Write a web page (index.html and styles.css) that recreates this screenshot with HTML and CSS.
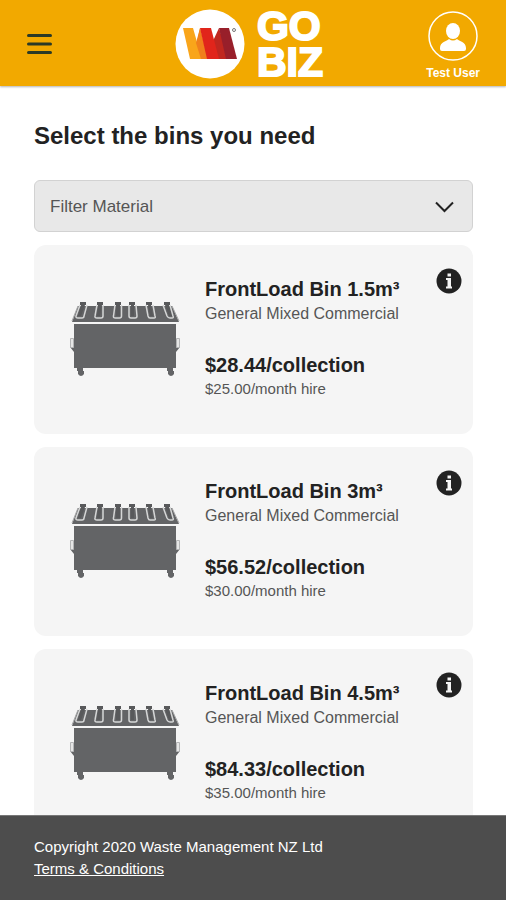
FILE: index.html
```html
<!DOCTYPE html>
<html lang="en">
<head>
<meta charset="utf-8">
<meta name="viewport" content="width=device-width, initial-scale=1">
<title>Go Biz</title>
<link rel="stylesheet" href="styles.css">
</head>
<body>
<svg class="sprite" aria-hidden="true">
  <symbol id="bin" viewBox="0 0 112 76">
    <g fill="#636466">
      <path d="M9 5H103L110 21H3Z"/>
      <path d="M5 23H107V67H5Z"/>
      <path d="M8 67h6v3h1v3q-3 4-6 0v-3H8zM98 67h6v3h1v3q-3 4-6 0v-3h-1z"/>
      <path d="M1 46h4v5zM107 46h4l-4 5z"/>
    </g>
    <g fill="#e6e6e6" stroke="#b4b5b6">
      <path d="M1.500 37.500h3v9h-3zM107.500 37.500h3v9h-3z"/>
    </g>
    <path d="M9 5 3 20M103 5l7 15" stroke="#a5a6a7" stroke-width="1"/>
    <g fill="#58595b">
      <path d="M11 1h6v3h-1l-4 11H9l3-11h-1zM28 1h6v3h-1l-2 11h-3l1-11h-1zM46 1h6v3h-1v11h-4V4h-1zM60 1h6v3h-1v11h-3V4h-2zM77 1h6v3h-1l2 11h-3L79 4h-2zM95 1h6v3h-1l3 11h-3L96 4h-1z"/>
    </g>
    <g fill="none" stroke="#d5d6d6" stroke-width="1.500">
      <path d="M11 4 7 15q-.5 2 2 2h4q2 0 2-2l3-11"/>
      <path d="M28 4 26 15q-.5 2 2 2h4q2 0 2-2V4"/>
      <path d="M46 4 44.500 15q-.5 2 2 2h4q2 0 2-2V4"/>
      <path d="M60 4V15q0 2 2 2h4q2 0 2-2L67 4"/>
      <path d="M77 4 79 15q.5 2 2 2h4q2 0 1-2L84 4"/>
      <path d="M94 4 98 15q1 2 3 2h2q2 0 1-2L101 4"/>
    </g>
  </symbol>
  <symbol id="info" viewBox="0 0 26 26">
    <circle cx="13" cy="13" r="12.500" fill="#222"/>
    <path d="M11.500 5.500h3.500v3h-3.500zM10 10h5v8.500h1v2h-6v-2h1.500V12H10z" fill="#f5f5f5"/>
  </symbol>
</svg>

<header class="topbar">
  <button class="menu" type="button" aria-label="Menu">
    <svg width="26" height="22" viewBox="0 0 26 22"><path d="M2.500 2.500H24.500M2.500 11H24.500M2.500 19.500H24.500" stroke="#2b3a26" stroke-width="3" stroke-linecap="round"/></svg>
  </button>
  <a class="brand" href="#">
    <svg width="70" height="70" viewBox="0 0 70 70" aria-hidden="true">
      <circle cx="35" cy="35" r="34.500" fill="#fff"/>
      <path d="M8 19h10l4 14 3-14 8 31H15z" fill="#f9a51a"/>
      <path d="M25 19 33 50h-7l-5-16z" fill="#f07f1c"/>
      <path d="M44 19 52 44 51 50H43L38 32z" fill="#c0271f"/>
      <path d="M25 19h11l8 31H32z" fill="#e1251b"/>
      <path d="M44 19h10l8 31H51z" fill="#981f2a"/>
      <circle cx="59" cy="21" r="1.500" fill="none" stroke="#777"/>
    </svg>
    <span class="wordmark"><span>GO</span><span>BIZ</span></span>
  </a>
  <button class="user" type="button">
    <svg width="50" height="50" viewBox="0 0 50 50" aria-hidden="true">
      <circle cx="25" cy="25" r="24" fill="none" stroke="#fff" stroke-width="1.500"/>
      <ellipse cx="25" cy="20" rx="7" ry="8" fill="#fff"/>
      <path d="M12 40V37C12 31 19 30 21 28Q25 31 29 28C31 30 38 31 38 37V38Q38 40 36 40H14Q12 40 12 38Z" fill="#fff"/>
    </svg>
    <span>Test User</span>
  </button>
</header>

<main class="content">
  <h1>Select the bins you need</h1>
  <div class="filter">
    <select aria-label="Filter Material"><option>Filter Material</option></select>
    <svg class="chevron" width="20" height="12" viewBox="0 0 20 12" aria-hidden="true"><path d="M2 1.500 10.500 10 19 1.500" fill="none" stroke="#222" stroke-width="2"/></svg>
  </div>
  <ul class="bins">
    <li class="card">
      <svg class="bin" aria-hidden="true"><use href="#bin"/></svg>
      <div class="details">
        <h2>FrontLoad Bin 1.5m³</h2>
        <p class="material">General Mixed Commercial</p>
        <p class="price">$28.44/collection</p>
        <p class="hire">$25.00/month hire</p>
      </div>
      <button class="info" type="button" aria-label="Bin information"><svg width="26" height="26"><use href="#info"/></svg></button>
    </li>
    <li class="card">
      <svg class="bin" aria-hidden="true"><use href="#bin"/></svg>
      <div class="details">
        <h2>FrontLoad Bin 3m³</h2>
        <p class="material">General Mixed Commercial</p>
        <p class="price">$56.52/collection</p>
        <p class="hire">$30.00/month hire</p>
      </div>
      <button class="info" type="button" aria-label="Bin information"><svg width="26" height="26"><use href="#info"/></svg></button>
    </li>
    <li class="card">
      <svg class="bin" aria-hidden="true"><use href="#bin"/></svg>
      <div class="details">
        <h2>FrontLoad Bin 4.5m³</h2>
        <p class="material">General Mixed Commercial</p>
        <p class="price">$84.33/collection</p>
        <p class="hire">$35.00/month hire</p>
      </div>
      <button class="info" type="button" aria-label="Bin information"><svg width="26" height="26"><use href="#info"/></svg></button>
    </li>
  </ul>
</main>

<footer class="footer">
  <p>Copyright 2020 Waste Management NZ Ltd</p>
  <a href="#">Terms &amp; Conditions</a>
</footer>
</body>
</html>
```
FILE: styles.css
```css
* { box-sizing: border-box; }

body {
  display: flex;
  flex-direction: column;
  height: 100vh;
  margin: 0;
  background: #fff;
  color: #222;
  font-family: "Liberation Sans", Arial, sans-serif;
}

h1, h2, p, ul { margin: 0; padding: 0; }

button {
  padding: 0;
  border: 0;
  background: none;
  color: inherit;
  font: inherit;
  cursor: pointer;
}

svg { display: block; }

.sprite { position: absolute; width: 0; height: 0; }

.topbar {
  display: grid;
  grid-template-columns: 1fr auto 1fr;
  align-items: center;
  flex: none;
  padding: 8px 26px 6px;
  background: #f2a900;
  box-shadow: 0 1px 2px rgba(0, 0, 0, 0.3);
}

.menu { justify-self: start; }

.brand {
  display: flex;
  align-items: center;
  gap: 12px;
  margin-right: 8px;
  color: #fff;
  text-decoration: none;
}

.wordmark {
  display: grid;
  font-size: 41px;
  font-weight: bold;
  line-height: 36px;
  -webkit-text-stroke: 2px #fff;
}

.user {
  display: flex;
  flex-direction: column;
  align-items: center;
  justify-self: end;
  gap: 5px;
  padding-top: 2px;
  color: #fff;
  font-size: 12px;
  font-weight: bold;
  line-height: 14px;
}

.content {
  flex: 1;
  min-height: 0;
  padding: 34px 33px 0 34px;
  overflow-y: auto;
  scrollbar-width: none;
}

h1 {
  margin-bottom: 28px;
  font-size: 24px;
  line-height: 32px;
}

.filter {
  position: relative;
  margin-bottom: 13px;
}

.filter select {
  width: 100%;
  height: 52px;
  padding: 0 48px 0 15px;
  border: 1px solid #d2d2d2;
  border-radius: 6px;
  appearance: none;
  background: #e8e8e8;
  color: #555;
  font: 17px "Liberation Sans", Arial, sans-serif;
}

.chevron {
  position: absolute;
  top: 21px;
  right: 19px;
  pointer-events: none;
}

.bins {
  display: grid;
  gap: 13px;
  list-style: none;
}

.card {
  display: flex;
  align-items: flex-start;
  padding: 23px 11px 32px 35px;
  border-radius: 12px;
  background: #f5f5f5;
}

.bin {
  flex: none;
  width: 112px;
  height: 76px;
  margin: 33px 0 1px;
}

.details {
  flex: 1;
  margin: 8px 0 0 24px;
  white-space: nowrap;
}

h2, .price {
  font-size: 20px;
  font-weight: bold;
  line-height: 26px;
}

.material {
  margin-bottom: 26px;
  color: #555;
  font-size: 16px;
  line-height: 24px;
}

.hire {
  padding-bottom: 2px;
  color: #555;
  font-size: 15px;
  line-height: 22px;
}

.footer {
  flex: none;
  padding: 20px 34px;
  border-top: 1px solid #777;
  background: #4d4d4d;
  color: #fff;
  font-size: 15px;
  line-height: 22px;
}

.footer a { color: inherit; }
```
